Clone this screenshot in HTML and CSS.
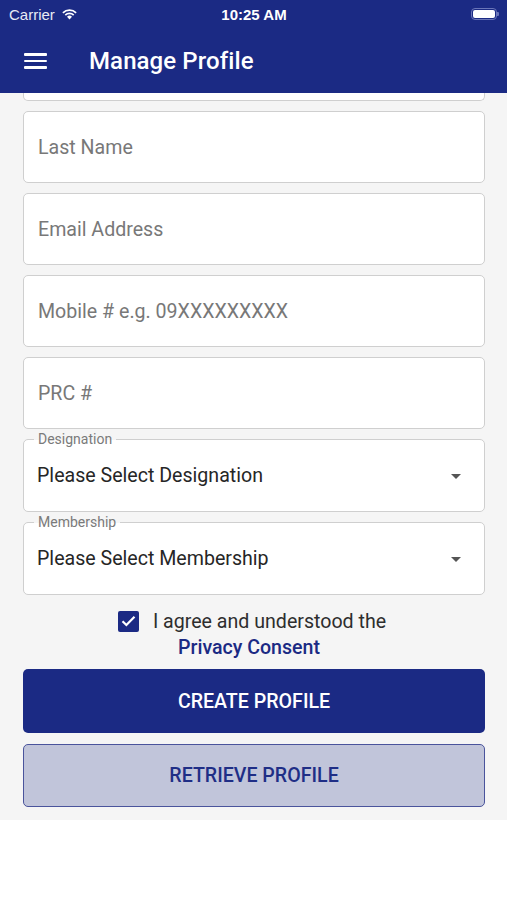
FILE: index.html
```html
<!DOCTYPE html>
<html lang="en">
<head>
    <meta charset="UTF-8">
    <meta name="viewport" content="width=device-width, initial-scale=1.0">
    <title>Manage Profile</title>
    <link rel="stylesheet" href="styles.css">
</head>
<body>
    <div class="header">
        <div class="status">
            <div class="carrier">Carrier
                <svg width="17" height="12" viewBox="0 0 17 12">
                    <path d="M8.5 11.5 L6 8.8 A3.6 3.6 0 0 1 11 8.8 Z" fill="#fff"/>
                    <path d="M3.7 6.6 A6.8 6.8 0 0 1 13.3 6.6 L12.1 7.8 A5.1 5.1 0 0 0 4.9 7.8 Z" fill="#fff"/>
                    <path d="M1.3 4.2 A10.2 10.2 0 0 1 15.7 4.2 L14.5 5.4 A8.5 8.5 0 0 0 2.5 5.4 Z" fill="#fff"/>
                </svg>
            </div>
            <div class="time">10:25 AM</div>
            <div class="battery"><span></span></div>
        </div>
        <div class="titlebar">
            <div class="menu"><span></span><span></span><span></span></div>
            <h1>Manage Profile</h1>
        </div>
    </div>

    <div class="content">
        <div class="field cut"></div>
        <div class="field"><span class="ph">Last Name</span></div>
        <div class="field"><span class="ph">Email Address</span></div>
        <div class="field"><span class="ph">Mobile # e.g. 09XXXXXXXXX</span></div>
        <div class="field"><span class="ph">PRC #</span></div>
        <div class="field select">
            <label>Designation</label>
            <span class="val">Please Select Designation</span>
            <i class="arrow"></i>
        </div>
        <div class="field select">
            <label>Membership</label>
            <span class="val">Please Select Membership</span>
            <i class="arrow"></i>
        </div>

        <div class="agree">
            <div class="agree-row">
                <span class="check">
                    <svg width="15" height="12" viewBox="0 0 15 12"><path d="M1.5 6.2 L5.4 10 L13.5 1.8" stroke="#fff" stroke-width="2.2" fill="none"/></svg>
                </span>
                <span>I agree and understood the</span>
            </div>
            <a class="consent">Privacy Consent</a>
        </div>

        <div class="btn primary">CREATE PROFILE</div>
        <div class="btn secondary">RETRIEVE PROFILE</div>
    </div>
</body>
</html>
```

FILE: styles.css
```css
*{
    margin: 0;
    padding: 0;
    box-sizing: border-box;
}
body{
    font-family: Roboto, "Liberation Sans", sans-serif;
    background: #fff;
    width: 507px;
}
.header{
    background: #1b2a84;
    height: 93px;
    color: #fff;
}
.status{
    height: 28px;
    display: flex;
    align-items: center;
    justify-content: space-between;
    padding: 0 8px 0 9px;
    font-family: "Liberation Sans", Arial, sans-serif;
    font-size: 15px;
}
.carrier{
    display: flex;
    align-items: center;
    gap: 6px;
    width: 120px;
    color: #e8eaf4;
}
.time{
    font-weight: bold;
    font-size: 15px;
}
.battery{
    width: 120px;
    display: flex;
    justify-content: flex-end;
    position: relative;
}
.battery span{
    width: 26px;
    height: 12px;
    border: 1.5px solid #6a75b8;
    border-radius: 4px;
    background: #fff;
    background-clip: content-box;
    padding: 1px;
    margin-right: 2px;
}
.battery::after{
    content: "";
    position: absolute;
    right: 0;
    top: 4px;
    width: 2px;
    height: 4px;
    background: #6a75b8;
    border-radius: 0 1px 1px 0;
}
.titlebar{
    display: flex;
    align-items: center;
    height: 65px;
    padding-left: 24px;
    padding-top: 1px;
}
.menu{
    width: 23px;
    display: flex;
    flex-direction: column;
    gap: 4px;
    margin-right: 42px;
}
.menu span{
    display: block;
    height: 2.5px;
    background: #fff;
    border-radius: 1px;
}
.titlebar h1{
    font-size: 24px;
    font-weight: 500;
    letter-spacing: 0.1px;
}
.content{
    background: #f5f5f5;
    padding: 0 22px 13px 23px;
}
.field{
    background: #fff;
    border: 1px solid #cfcfcf;
    border-radius: 5px;
    height: 72px;
    margin-bottom: 10px;
    display: flex;
    align-items: center;
    padding-left: 14px;
    position: relative;
    font-size: 19.6px;
}
.field.cut{
    height: 8px;
    border-top: none;
    border-radius: 0 0 5px 5px;
    margin-bottom: 10px;
}
.ph{
    color: #787878;
}
.select{
    padding-left: 13px;
    height: 73px;
}
.select label{
    position: absolute;
    left: 10px;
    top: -10px;
    font-size: 14px;
    color: #7a7a7a;
    padding: 0 4px;
    line-height: 18px;
    background: linear-gradient(#f5f5f5 55%, #fff 55%);
}
.val{
    color: #262626;
}
.arrow{
    position: absolute;
    right: 23px;
    top: 34px;
    width: 0;
    height: 0;
    border-left: 5px solid transparent;
    border-right: 5px solid transparent;
    border-top: 5px solid #555;
}
.agree{
    text-align: center;
    padding-top: 2px;
    padding-bottom: 9px;
}
.agree-row{
    display: flex;
    align-items: center;
    justify-content: center;
    gap: 14px;
    font-size: 19.6px;
    color: #2e2e2e;
    margin-right: 4px;
    height: 28px;
}
.check{
    width: 21px;
    height: 21px;
    background: #1b2a84;
    border-radius: 2px;
    display: flex;
    align-items: center;
    justify-content: center;
}
.consent{
    display: block;
    font-size: 19.6px;
    font-weight: 500;
    color: #1b2a84;
    line-height: 25px;
    margin-right: 10px;
}
.btn{
    height: 64px;
    border-radius: 5px;
    display: flex;
    align-items: center;
    justify-content: center;
    font-size: 19.6px;
    font-weight: 500;
}
.primary{
    background: #1b2a84;
    color: #fff;
    margin-bottom: 11px;
}
.secondary{
    background: #c1c5da;
    border: 1.5px solid #4a549c;
    color: #1f2e86;
    height: 63px;
}
```
